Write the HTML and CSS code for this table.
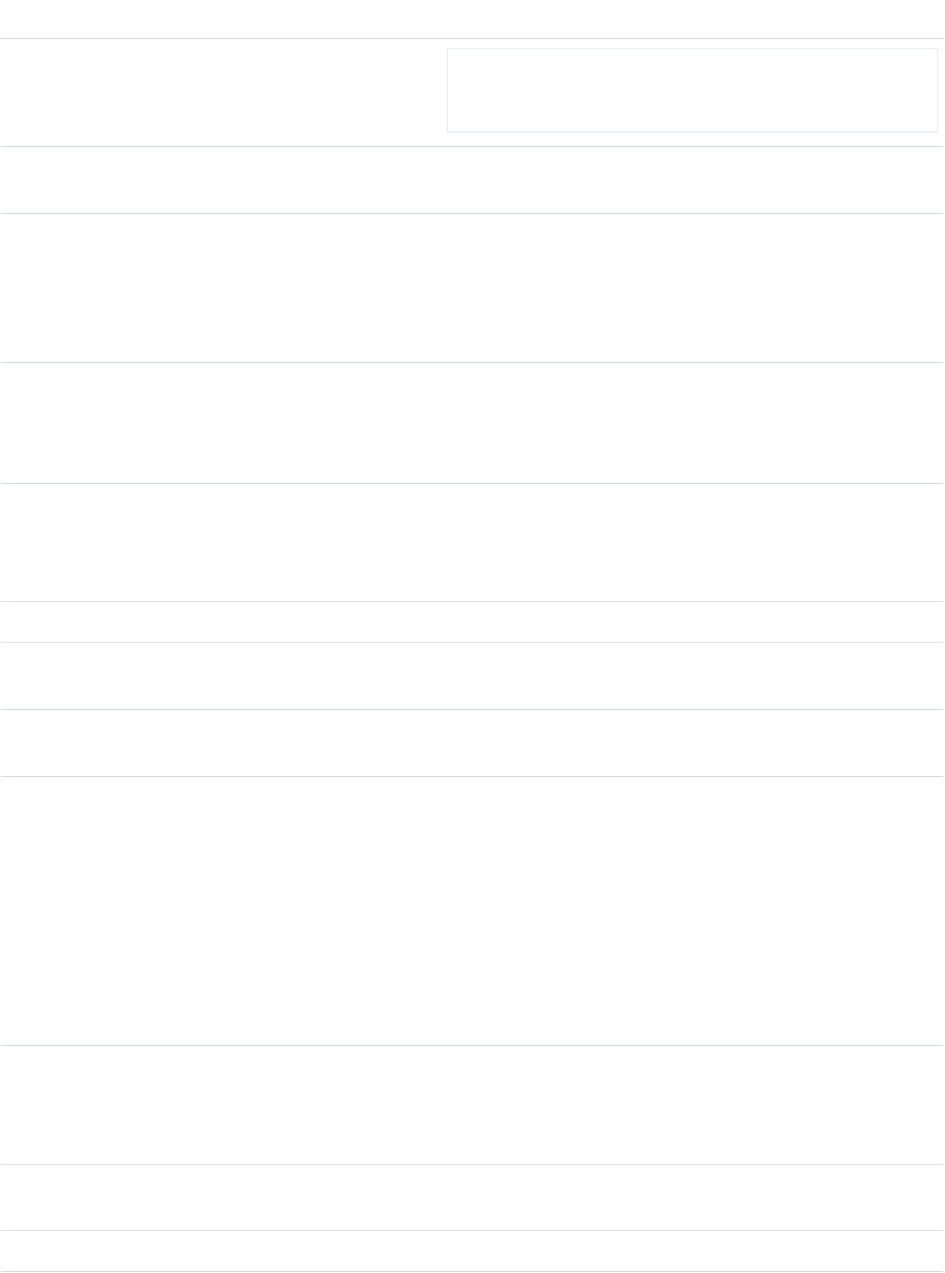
FILE: index.html
```html
<!DOCTYPE html>
<html lang="en">
<head>
  <meta charset="UTF-8">
  <title>Record</title>
  <meta name="viewport" content="width=device-width, initial-scale=1.0">
  <link rel="stylesheet" href="styles.css">
</head>
<body>
  <div class="page">
    <div class="top"></div>

    <!-- field rows -->
    <div class="row row-first">
      <div class="label"></div>
      <div class="value">
        <div class="box"></div>
      </div>
    </div>
    <div class="row row-short"></div>
    <div class="row row-tall"></div>
    <div class="row row-mid"></div>
    <div class="row row-mid2"></div>
    <div class="row light row-tiny"></div>
    <div class="row light row-short"></div>
    <div class="row row-short"></div>
    <div class="row row-big"></div>
    <div class="row row-mid3"></div>
    <div class="row light row-short2"></div>
    <div class="row light row-tiny"></div>
    <div class="row last"></div>
  </div>
</body>
</html>
```

FILE: styles.css
```css
* {
  margin: 0;
  padding: 0;
  box-sizing: border-box;
}
body {
  font-family: "Liberation Sans", Arial, sans-serif;
  background-color: #ffffff;
}
.page {
  width: 942px;
  margin-left: 1px;
}
.top {
  height: 38px;
}
.row {
  border-top: 1px solid #d3dbe2;
}
.row.light {
  border-top-color: #dde3e8;
}
.row-first {
  height: 108px;
  display: flex;
  padding: 9px 5px 0 0;
}
.label {
  width: 446px;
}
.value {
  flex: 1;
}
.box {
  height: 84px;
  border: 1px solid #e2eff8;
  box-shadow: 0 1px 1px rgba(200, 225, 240, 0.35);
}
.row-tiny { height: 41px; }
.row-short2 { height: 66px; }
.row-short { height: 67px; }
.row-mid2 { height: 118px; }
.row-mid3 { height: 119px; }
.row-mid { height: 121px; }
.row-tall { height: 149px; }
.row-big { height: 269px; }
.row.last {
  height: 1px;
}
```
